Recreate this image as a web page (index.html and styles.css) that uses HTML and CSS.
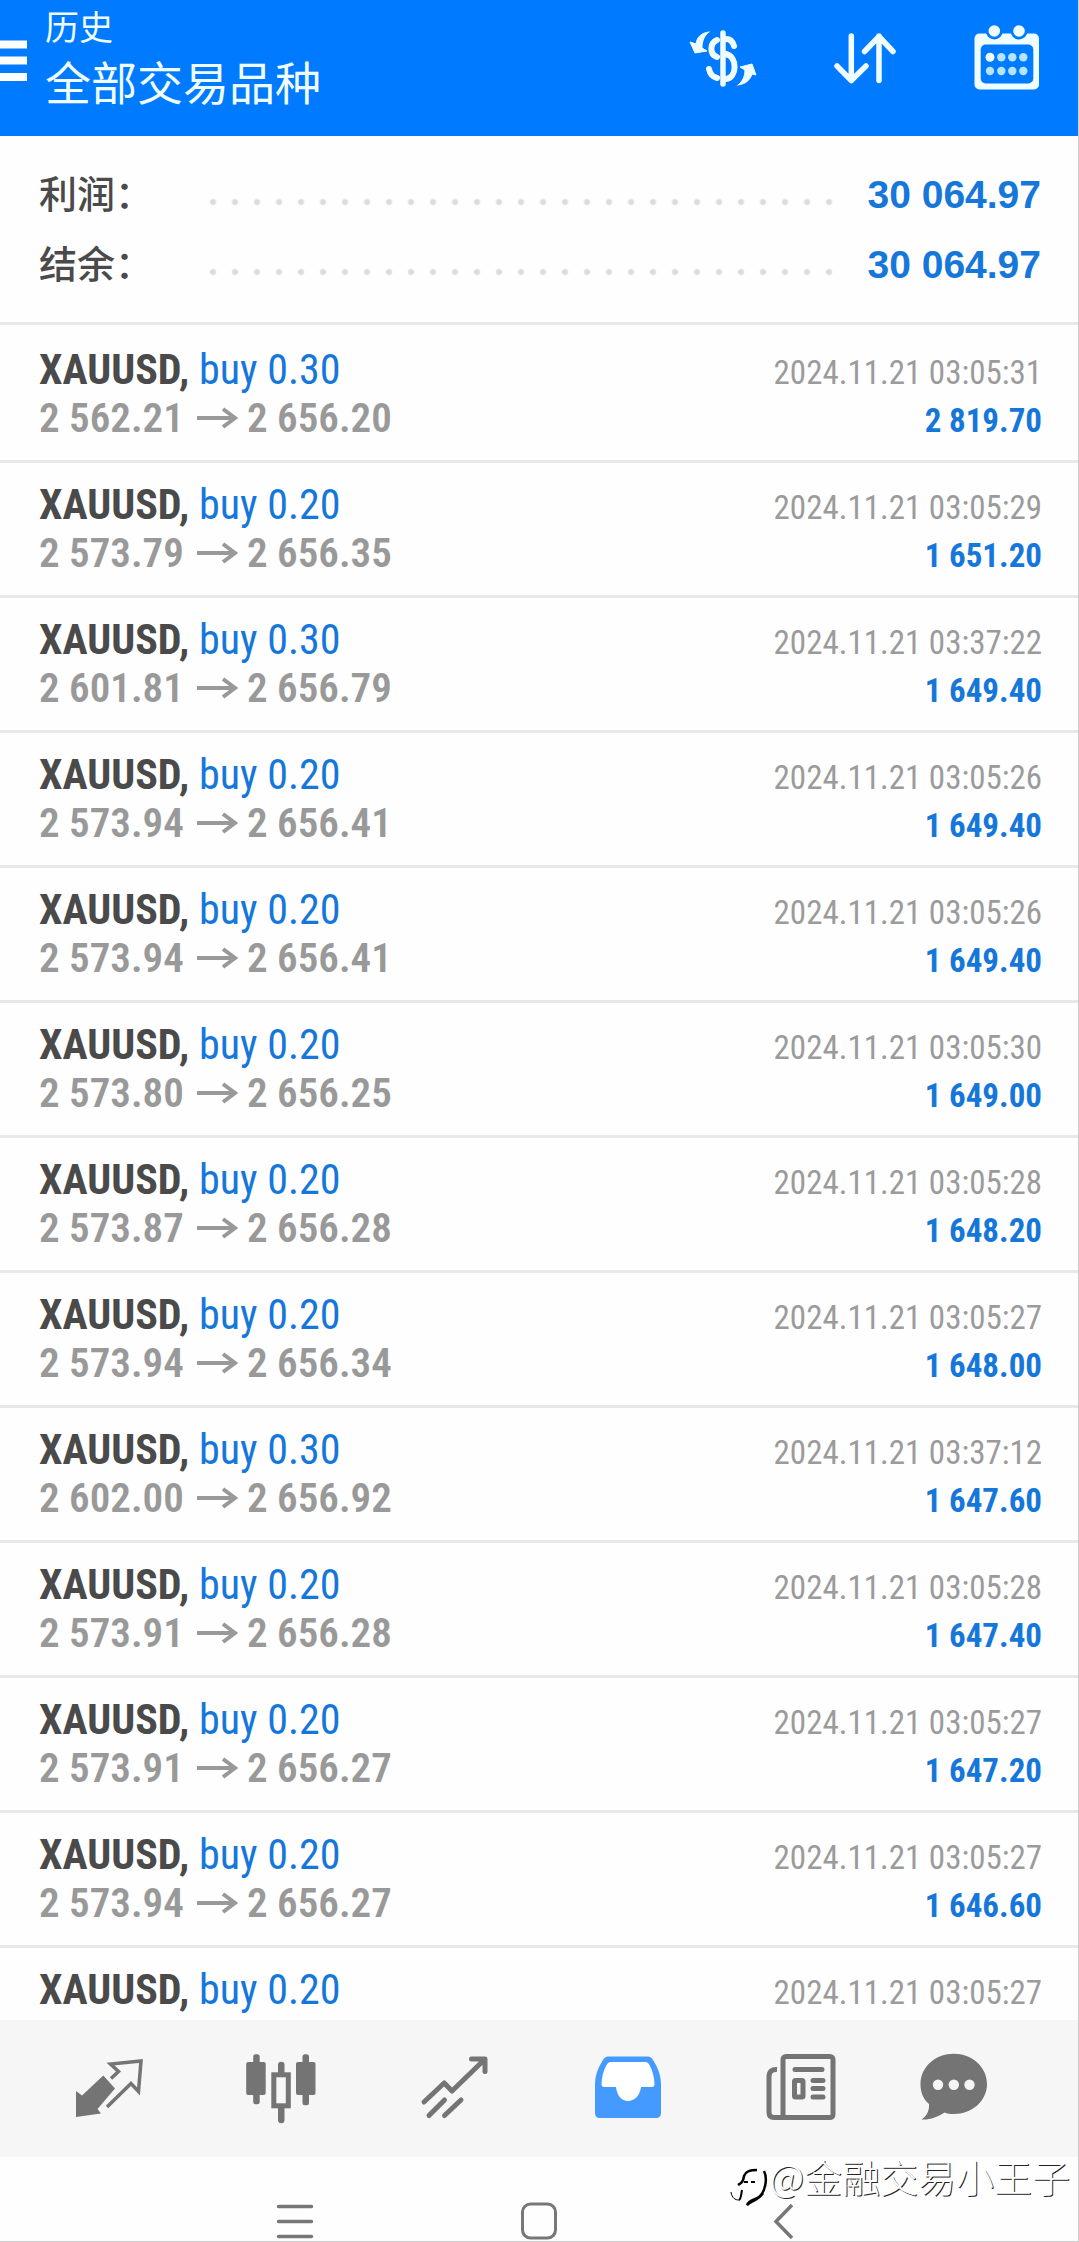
FILE: index.html
```html
<!DOCTYPE html>
<html lang="zh-CN">
<head>
<meta charset="utf-8">
<meta name="viewport" content="width=device-width, initial-scale=1">
<title>历史</title>
<link rel="stylesheet" href="styles.css">
</head>
<body>
<svg class="sprite" aria-hidden="true">
  <symbol id="arrow" viewBox="0 0 42 24"><path d="M1 12H39M27 3L39 12L27 21" fill="none" stroke="currentColor" stroke-width="4"/></symbol>
</svg>
<div class="app">
  <header class="topbar">
    <button class="menu" aria-label="菜单"><svg viewBox="0 0 28 42"><path d="M0 4.500H27M0 20.500H27M0 37H27" stroke="#fff" stroke-width="8"/></svg></button>
    <div class="titles">
      <h1 class="title">历史</h1>
      <p class="subtitle">全部交易品种</p>
    </div>
    <div class="tools">
      <button class="icon-btn" aria-label="货币"><svg class="icon" viewBox="0 0 72 72" fill="none" stroke="#effdff" stroke-linecap="round">
        <path d="M36 10V61" stroke-width="5.500"/>
        <path d="M30 17C23 20 22 31 30 34M39 16C44 16 46 19 47 23M39 31C51 34 50 55 39 56M22 46C23 51 26 54 30 55" stroke-width="6"/>
        <path d="M22 9C14 10 10 14 9 21L3 19L8 30L20 28L15 25C15 18 17 13 22 9ZM51 62C59 61 63 57 65 51L69 52L65 41L53 44L58 47C58 53 56 58 51 62Z" fill="#effdff" stroke-width="1" stroke-linejoin="round"/>
      </svg></button>
      <button class="icon-btn" aria-label="排序"><svg class="icon" viewBox="0 0 72 72" fill="none" stroke="#effdff" stroke-width="5.500" stroke-linecap="round" stroke-linejoin="round">
        <path d="M22.300 13V57M8 43L22.300 57.500L37 43M50 57.500V13M35.500 28.500L50 13.500L64 28.500"/>
      </svg></button>
      <button class="icon-btn" aria-label="日期"><svg class="icon" viewBox="0 0 72 72" fill="#effdff">
        <rect x="3.500" y="10.500" width="64.500" height="56" rx="5"/>
        <circle cx="23.300" cy="8" r="8.500" fill="#007aff"/><circle cx="48" cy="8" r="8.500" fill="#007aff"/>
        <circle cx="23.300" cy="8" r="5.800"/><circle cx="48" cy="8" r="5.800"/>
        <rect x="9.700" y="21.500" width="52.600" height="39" rx="5" fill="#007aff"/>
        <circle cx="19" cy="34.300" r="4.500"/>
        <g fill="#b5e4ff"><circle cx="30.300" cy="34.300" r="4.200"/><circle cx="41.300" cy="34.300" r="4.200"/><circle cx="52.300" cy="34.300" r="4.200"/><circle cx="19" cy="48" r="4.200"/><circle cx="30.300" cy="48" r="4.200"/><circle cx="41.300" cy="48" r="4.200"/><circle cx="52.300" cy="48" r="4.200"/></g>
      </svg></button>
    </div>
  </header>

  <dl class="summary">
    <div class="sum-row"><dt>利润：</dt><dd class="dots"></dd><dd class="total">30 064.97</dd></div>
    <div class="sum-row"><dt>结余：</dt><dd class="dots"></dd><dd class="total">30 064.97</dd></div>
  </dl>

  <ul class="deals">
    <li class="deal"><p class="name"><b>XAUUSD,</b> buy 0.30</p><time>2024.11.21 03:05:31</time><p class="prices"><span class="open">2 562.21</span><svg class="to"><use href="#arrow"/></svg>2 656.20</p><p class="profit">2 819.70</p></li>
    <li class="deal"><p class="name"><b>XAUUSD,</b> buy 0.20</p><time>2024.11.21 03:05:29</time><p class="prices"><span class="open">2 573.79</span><svg class="to"><use href="#arrow"/></svg>2 656.35</p><p class="profit">1 651.20</p></li>
    <li class="deal"><p class="name"><b>XAUUSD,</b> buy 0.30</p><time>2024.11.21 03:37:22</time><p class="prices"><span class="open">2 601.81</span><svg class="to"><use href="#arrow"/></svg>2 656.79</p><p class="profit">1 649.40</p></li>
    <li class="deal"><p class="name"><b>XAUUSD,</b> buy 0.20</p><time>2024.11.21 03:05:26</time><p class="prices"><span class="open">2 573.94</span><svg class="to"><use href="#arrow"/></svg>2 656.41</p><p class="profit">1 649.40</p></li>
    <li class="deal"><p class="name"><b>XAUUSD,</b> buy 0.20</p><time>2024.11.21 03:05:26</time><p class="prices"><span class="open">2 573.94</span><svg class="to"><use href="#arrow"/></svg>2 656.41</p><p class="profit">1 649.40</p></li>
    <li class="deal"><p class="name"><b>XAUUSD,</b> buy 0.20</p><time>2024.11.21 03:05:30</time><p class="prices"><span class="open">2 573.80</span><svg class="to"><use href="#arrow"/></svg>2 656.25</p><p class="profit">1 649.00</p></li>
    <li class="deal"><p class="name"><b>XAUUSD,</b> buy 0.20</p><time>2024.11.21 03:05:28</time><p class="prices"><span class="open">2 573.87</span><svg class="to"><use href="#arrow"/></svg>2 656.28</p><p class="profit">1 648.20</p></li>
    <li class="deal"><p class="name"><b>XAUUSD,</b> buy 0.20</p><time>2024.11.21 03:05:27</time><p class="prices"><span class="open">2 573.94</span><svg class="to"><use href="#arrow"/></svg>2 656.34</p><p class="profit">1 648.00</p></li>
    <li class="deal"><p class="name"><b>XAUUSD,</b> buy 0.30</p><time>2024.11.21 03:37:12</time><p class="prices"><span class="open">2 602.00</span><svg class="to"><use href="#arrow"/></svg>2 656.92</p><p class="profit">1 647.60</p></li>
    <li class="deal"><p class="name"><b>XAUUSD,</b> buy 0.20</p><time>2024.11.21 03:05:28</time><p class="prices"><span class="open">2 573.91</span><svg class="to"><use href="#arrow"/></svg>2 656.28</p><p class="profit">1 647.40</p></li>
    <li class="deal"><p class="name"><b>XAUUSD,</b> buy 0.20</p><time>2024.11.21 03:05:27</time><p class="prices"><span class="open">2 573.91</span><svg class="to"><use href="#arrow"/></svg>2 656.27</p><p class="profit">1 647.20</p></li>
    <li class="deal"><p class="name"><b>XAUUSD,</b> buy 0.20</p><time>2024.11.21 03:05:27</time><p class="prices"><span class="open">2 573.94</span><svg class="to"><use href="#arrow"/></svg>2 656.27</p><p class="profit">1 646.60</p></li>
    <li class="deal"><p class="name"><b>XAUUSD,</b> buy 0.20</p><time>2024.11.21 03:05:27</time></li>
  </ul>

  <nav class="tabs">
    <a href="#quotes" aria-label="行情"><svg class="icon" viewBox="0 0 72 72">
      <path d="M39 26.500L46.500 19.500L38.500 12L69 9L66.500 39.500L59 31.500L35 55" fill="none" stroke="#747474" stroke-width="3.500"/>
      <path d="M31.300 23.500L43 36.500L25.500 57L29 61.500L4 65V39L10 43.500Z" fill="#747474"/>
    </svg></a>
    <a href="#charts" aria-label="图表"><svg class="icon" viewBox="0 0 72 72" fill="#747474">
      <rect x="8.200" y="2.300" width="6.500" height="50" rx="2.500"/><rect x="1.200" y="10" width="19.500" height="33" rx="2"/>
      <rect x="57.500" y="2.300" width="6.500" height="51" rx="2.500"/><rect x="51" y="10" width="19.500" height="33" rx="2"/>
      <path d="M33 22V13A3.200 3.200 0 0 1 39.500 13V22ZM33 55V68A3.200 3.200 0 0 0 39.500 68V55Z"/>
      <rect x="28.800" y="22.800" width="14.500" height="31" fill="#f6f6f6" stroke="#747474" stroke-width="5"/>
    </svg></a>
    <a href="#trade" aria-label="交易"><svg class="icon" viewBox="0 0 72 72" fill="none" stroke="#747474" stroke-width="5" stroke-linecap="round" stroke-linejoin="round">
      <path d="M6 50L26.200 31L34 39L65.500 8.500M53.500 7H67V19.500M11 63.500L26.500 48M26.500 63.500L43 48"/>
    </svg></a>
    <a href="#history" aria-label="历史" aria-current="page"><svg class="icon" viewBox="0 0 72 72">
      <path d="M16 4.500H56Q59 4.500 61 8Q69 20 69 32V61Q69 66 64 66H8Q3 66 3 61V32Q3 20 11 8Q13 4.500 16 4.500Z" fill="#459aff"/>
      <path d="M19 10H53Q56 10 57.500 13Q62 21 62.500 32Q62.500 35 60 35H49C48 44 42 49 36 49S25 44 24 35H12Q9.500 35 9.500 32Q10 21 14.500 13Q16 10 19 10Z" fill="#fff"/>
    </svg></a>
    <a href="#news" aria-label="新闻"><svg class="icon" viewBox="0 0 72 72" fill="none" stroke="#747474" stroke-width="5">
      <rect x="18" y="4.500" width="50" height="61" rx="3"/>
      <path d="M12 17.500Q4 17 4 25V60Q4 65.500 9 65.500H20"/>
      <path d="M30 17.500H57M48 28.500H58M48 36.500H58M48 45H58" stroke-linecap="round"/>
      <rect x="29.500" y="28.500" width="8.500" height="16.500" rx="1"/>
    </svg></a>
    <a href="#chat" aria-label="聊天"><svg class="icon" viewBox="0 0 72 72">
      <path d="M35.700 1.800C54 1.800 69 15 69 32C69 49 54 62 35.700 62C32 62 29 61.500 26.500 60.500C20 65 12 68 3.500 67.500C9 64 11.500 58 11 52C5 47 2.500 40 2.500 32C2.500 15 17.500 1.800 35.700 1.800Z" fill="#747474"/>
      <g fill="#f6f6f6"><circle cx="20" cy="32.700" r="5.200"/><circle cx="35.800" cy="32.700" r="5.200"/><circle cx="51.500" cy="32.700" r="5.200"/></g>
    </svg></a>
  </nav>

  <footer class="sysbar">
    <button aria-label="最近任务"><svg class="key" viewBox="0 0 40 40"><path d="M3.500 5.500H36.500M3.500 20.500H36.500M3.500 35.500H36.500" fill="none" stroke="#777" stroke-width="3.500" stroke-linecap="round"/></svg></button>
    <button aria-label="主屏幕"><svg class="key" viewBox="0 0 40 40"><rect x="3.500" y="3" width="33" height="34" rx="8" fill="none" stroke="#777" stroke-width="3"/></svg></button>
    <button aria-label="返回"><svg class="key" viewBox="0 0 40 40"><path d="M29 4L13 20.500L29 37" fill="none" stroke="#777" stroke-width="3.500"/></svg></button>
  </footer>

  <div class="watermark">
    <svg class="mark" viewBox="0 0 40 44" fill="none" stroke="#000">
      <path d="M9 19C12 17 14 17 15 10C17 5 21 4 28 4" stroke-width="2.500"/>
      <path d="M35 5C39 13 36 26 30 31C26 34 20 34 18 39C23 34 29 35 34 27" stroke-width="2.500"/>
      <path d="M15 16H19M22 16H26M13 24C12 29 12 33 10 34" stroke-width="2"/>
      <path d="M2 26C3 32 6 34 10 34" stroke-width="1"/>
    </svg>
    <span>@金融交易小王子</span>
  </div>
</div>
</body>
</html>
```
FILE: styles.css
```css
* { box-sizing: border-box; }

body,
h1,
p,
dl,
dd,
ul {
  margin: 0;
  padding: 0;
}

body {
  background: #fefefe;
  font-family: "Roboto Condensed", Roboto, "Noto Sans CJK SC", sans-serif;
}

button {
  display: flex;
  padding: 0;
  border: 0;
  background: none;
}

.sprite {
  position: absolute;
  width: 0;
  height: 0;
}

.app {
  position: relative;
  display: flex;
  flex-direction: column;
  height: 100vh;
  border-right: 1px solid #ccc;
  border-bottom: 1px solid #ccc;
}

/* top bar */
.topbar {
  display: flex;
  align-items: flex-start;
  flex: none;
  min-height: 136px;
  padding-right: 35px;
  background: #007aff;
  color: #effdff;
  font-family: "Noto Sans CJK SC", sans-serif;
}

.menu { margin-top: 40px; }

.menu svg {
  width: 28px;
  height: 42px;
}

.titles {
  flex: 1;
  padding: 3px 0 0 17px;
}

.title {
  font-size: 34px;
  line-height: 46px;
  font-weight: 400;
}

.subtitle {
  font-size: 46px;
  line-height: 62px;
}

.tools {
  display: flex;
  gap: 70px;
  padding-top: 23px;
}

.icon {
  display: block;
  width: 72px;
  height: 72px;
}

/* account summary */
.summary {
  flex: none;
  padding: 24px 37px 22px 39px;
  border-bottom: 3px solid #e8e8e8;
}

.sum-row {
  display: grid;
  grid-template-columns: 163px 1fr 200px;
  height: 70px;
}

.sum-row dt {
  color: #4a4a4a;
  font: 500 38px/64px "Noto Sans CJK SC", sans-serif;
}

.dots {
  align-self: center;
  height: 22px;
  margin-top: 14px;
  background: radial-gradient(circle, #dcdcdc 2px, transparent 4px) 0 0 / 22px 22px;
}

.total {
  color: #1677db;
  font: 700 39px/70px "Liberation Sans", sans-serif;
  text-align: right;
}

/* deals */
.deals {
  flex: 1;
  min-height: 0;
  overflow: hidden;
  padding-top: 3px;
  list-style: none;
}

.deal {
  display: grid;
  grid-template-columns: 1fr auto;
  grid-auto-rows: 48px;
  align-items: baseline;
  padding: 18px 36px 18px 39px;
  border-bottom: 3px solid #e8e8e8;
  line-height: 48px;
}

.deal:last-child { border-bottom: 0; }

.name {
  color: #1677db;
  font-size: 42px;
}

.name b {
  color: #4a4a4a;
  font-weight: 700;
}

.deal time {
  color: #9b9b9b;
  font-size: 33px;
  text-align: right;
}

.prices {
  display: flex;
  align-items: center;
  color: #999;
  font-size: 41px;
  font-weight: 600;
}

.open { width: 157px; }

.to {
  width: 42px;
  height: 24px;
  margin-right: 9px;
}

.profit {
  color: #1677db;
  font-size: 33px;
  font-weight: 700;
  text-align: right;
}

/* bottom tabs */
.tabs {
  display: grid;
  grid-template-columns: repeat(5, 17fr) 13fr;
  justify-items: center;
  flex: none;
  padding: 32px 58px 33px 21px;
  background: #f6f6f6;
}

/* system keys */
.sysbar {
  display: flex;
  justify-content: center;
  flex: none;
  gap: 204px;
  padding-top: 44px;
}

.key {
  display: block;
  width: 40px;
  height: 40px;
}

.watermark {
  position: absolute;
  right: 8px;
  bottom: 31px;
  display: flex;
  align-items: flex-start;
  color: #fff;
  font: 300 38px/52px "Noto Sans CJK SC", sans-serif;
  text-shadow: 1px 1px 0 #222;
}

.mark {
  width: 40px;
  height: 44px;
  margin-top: 16px;
}
```
